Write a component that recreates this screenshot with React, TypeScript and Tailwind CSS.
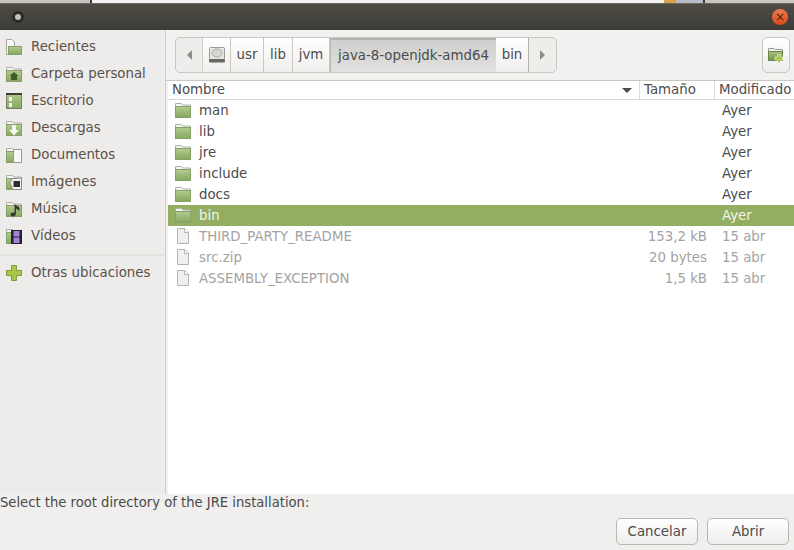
import React from "react";

const font = { fontFamily: '"DejaVu Sans", sans-serif' };

function FolderIcon({ selected }: { selected?: boolean }) {
  const id = selected ? "fold-sel" : "fold";
  return (
    <svg width="16" height="15" viewBox="0 0 16 15" className="shrink-0">
      <defs>
        <linearGradient id={id} x1="0" y1="0" x2="0" y2="1">
          <stop offset="0" stopColor="#b4cb90" />
          <stop offset="1" stopColor="#86a75c" />
        </linearGradient>
      </defs>
      <path d="M0.5 0.5 H6.5 L8 2 H15.5 V14.5 H0.5 Z" fill="#f4f4f1" stroke="#b0b0aa" />
      <rect x="0.5" y="3.5" width="15" height="11" fill={`url(#${id})`} stroke="#86a06a" />
    </svg>
  );
}

function FileIcon() {
  return (
    <svg width="16" height="16" viewBox="0 0 16 16" className="shrink-0">
      <path d="M2.5 0.5 H10 L13.5 4 V15.5 H2.5 Z" fill="#efefef" stroke="#b4b4b4" />
      <path d="M9.5 0.5 V4.5 H13.5" fill="#fff" stroke="#b4b4b4" />
    </svg>
  );
}

function SideIcon({ kind }: { kind: string }) {
  return (
    <svg width="16" height="16" viewBox="0 0 16 16" className="shrink-0">
      <defs>
        <linearGradient id={`side-${kind}`} x1="0" y1="0" x2="0" y2="1">
          <stop offset="0" stopColor="#b4cb90" />
          <stop offset="1" stopColor="#86a75c" />
        </linearGradient>
      </defs>
      {kind === "recent" && (
        <>
          <path d="M0.5 0.5 H6 L8.5 3 V15.5 H0.5 Z" fill="#f6f6f4" stroke="#a8a8a2" />
          <rect x="2.5" y="7.5" width="13" height="8" fill="url(#side-recent)" stroke="#86a06a" />
        </>
      )}
      {kind === "desktop" ? (
        <>
          <rect x="0.5" y="0.5" width="15" height="15" fill="url(#side-desktop)" stroke="#78806c" />
          <rect x="0" y="0" width="16" height="2" fill="#3f3d38" />
          <rect x="3" y="4" width="3" height="4" fill="#f2f2f0" />
          <rect x="3" y="10" width="3" height="4" fill="#f2f2f0" />
        </>
      ) : kind !== "recent" && kind !== "plus" ? (
        <>
          <path d="M0.5 1.5 H6.5 L8 3 H15.5 V15.5 H0.5 Z" fill="#f4f4f1" stroke="#b0b0aa" />
          <rect x="0.5" y="4.5" width="15" height="11" fill={`url(#side-${kind})`} stroke="#86a06a" />
        </>
      ) : null}
      {kind === "home" && <path d="M8 6 L12.5 10 H11 V14 H5 V10 H3.5 Z" fill="#3f5a2a" />}
      {kind === "download" && <path d="M6 5 H10 V10 H13 L8 15.5 L3 10 H6 Z" fill="#f7f7f5" />}
      {kind === "docs" && <rect x="7.5" y="2.5" width="8" height="13" fill="#f7f7f5" stroke="#9a9a94" />}
      {kind === "pics" && (
        <>
          <path d="M6.5 4.5 L15.5 4 V15.5 H7 L4 9 Z" fill="#f2f2f0" stroke="#8c8c86" />
          <rect x="7.5" y="7" width="6.5" height="6" fill="#2e2a33" />
        </>
      )}
      {kind === "music" && (
        <>
          <ellipse cx="7" cy="13.5" rx="2.5" ry="2" fill="#3a3a36" />
          <path d="M8.5 13.5 V3 L13.5 6.5 V10 L10 7.5 V13.5 Z" fill="#3a3a36" />
        </>
      )}
      {kind === "video" && (
        <>
          <rect x="5" y="2" width="11" height="14" fill="#26222b" />
          <rect x="7.5" y="3" width="6" height="5.5" fill="#a582d8" />
          <rect x="7.5" y="9.5" width="6" height="5.5" fill="#a582d8" />
        </>
      )}
      {kind === "plus" && (
        <path d="M5.5 0.5 H10.5 V5.5 H15.5 V10.5 H10.5 V15.5 H5.5 V10.5 H0.5 V5.5 H5.5 Z" fill="#a9c64c" stroke="#7f9a3a" />
      )}
    </svg>
  );
}

const places = [
  ["recent", "Recientes"],
  ["home", "Carpeta personal"],
  ["desktop", "Escritorio"],
  ["download", "Descargas"],
  ["docs", "Documentos"],
  ["pics", "Imágenes"],
  ["music", "Música"],
  ["video", "Vídeos"],
];

const rows = [
  { name: "man", size: "", date: "Ayer", folder: true },
  { name: "lib", size: "", date: "Ayer", folder: true },
  { name: "jre", size: "", date: "Ayer", folder: true },
  { name: "include", size: "", date: "Ayer", folder: true },
  { name: "docs", size: "", date: "Ayer", folder: true },
  { name: "bin", size: "", date: "Ayer", folder: true, selected: true },
  { name: "THIRD_PARTY_README", size: "153,2 kB", date: "15 abr" },
  { name: "src.zip", size: "20 bytes", date: "15 abr" },
  { name: "ASSEMBLY_EXCEPTION", size: "1,5 kB", date: "15 abr" },
];

const crumbClass =
  "h-full flex items-center justify-center border-r border-[#c9c7c3] bg-gradient-to-b from-white to-[#f0efed]";

export default function App() {
  return (
    <div className="w-[794px] h-[550px] overflow-hidden flex flex-col text-[13.33px] text-[#4c4c4c] bg-[#f2f1f0]" style={font}>
      {/* sliver of the window behind */}
      <div className="h-[3px] shrink-0 flex bg-[#c9c7c3]">
        <div className="w-[90px] bg-[#c8c6c2]" />
        <div className="w-[2px] bg-[#3c3b35]" />
        <div className="w-[572px] bg-[#f4f4f2]" />
        <div className="w-[12px] bg-[#d9a24a]" />
        <div className="w-[27px] bg-[#b9bcc6]" />
        <div className="w-[2px] bg-[#3c3b35]" />
      </div>

      {/* title bar */}
      <div className="h-[27px] shrink-0 flex items-center justify-between pl-[12px] pr-[6px] bg-gradient-to-b from-[#4f4c45] to-[#3c3b35] border-t border-[#6a675f]">
        <div className="w-[12px] h-[12px] rounded-full bg-[#c2c1bc] border-[3px] border-[#2b2a25]" />
        <div className="w-[16px] h-[16px] rounded-full bg-gradient-to-b from-[#ef7a4c] to-[#d8481b] flex items-center justify-center text-[12px] leading-none text-[#4a1f10]">
          ×
        </div>
      </div>

      <div className="flex-1 flex min-h-0">
        {/* sidebar */}
        <div className="w-[166px] shrink-0 bg-[#edecea] border-r border-[#cfcdc8] pt-[3px]">
          {places.map(([kind, label]) => (
            <div key={label} className="h-[27px] flex items-center gap-[9px] pl-[6px]">
              <SideIcon kind={kind} />
              <span className="text-[#5b5149]">{label}</span>
            </div>
          ))}
          <div className="mt-[5px] border-t-2 border-[#e3e2df]" />
          <div className="mt-[3px] h-[27px] flex items-center gap-[9px] pl-[6px]">
            <SideIcon kind="plus" />
            <span className="text-[#5b5149]">Otras ubicaciones</span>
          </div>
        </div>

        <div className="flex-1 min-w-0 flex flex-col">
          {/* path bar */}
          <div className="h-[51px] shrink-0 flex items-start justify-between pt-[7px] pl-[9px] pr-[4px] bg-[#f2f1ef] border-b border-[#c9c7c3]">
            <div className="h-[36px] flex items-stretch border border-[#c9c7c3] rounded-[5px] bg-[#eeedeb] overflow-hidden">
              <div className="w-[27px] border-r border-[#d2d0cc] flex items-center justify-center">
                <div className="w-0 h-0 border-y-[5px] border-y-transparent border-r-[5px] border-r-[#8d8c88]" />
              </div>
              <div className={`${crumbClass} w-[28px]`}>
                <svg width="18" height="16" viewBox="0 0 18 16">
                  <rect x="1.5" y="0.5" width="15" height="12" rx="1" fill="#e6e6e2" stroke="#9a9a94" />
                  <ellipse cx="9" cy="6" rx="5" ry="4" fill="#d6d6d1" stroke="#ababa5" />
                  <rect x="1" y="12" width="16" height="3.5" rx="1" fill="#6a6a65" />
                </svg>
              </div>
              <div className={`${crumbClass} w-[33px]`}>usr</div>
              <div className={`${crumbClass} w-[29px]`}>lib</div>
              <div className={`${crumbClass} w-[37px]`}>jvm</div>
              <div className="w-[166px] flex items-center justify-center border-l border-[#b9b7b3] border-t-2 border-t-[#b5b3af] bg-gradient-to-b from-[#cfcfcd] to-[#e2e1df]">
                java-8-openjdk-amd64
              </div>
              <div className={`${crumbClass} w-[33px] border-r-[#b5b3af]`}>bin</div>
              <div className="w-[27px] flex items-center justify-center">
                <div className="w-0 h-0 border-y-[5px] border-y-transparent border-l-[5px] border-l-[#8d8c88]" />
              </div>
            </div>
            <div className="w-[28px] h-[36px] flex items-center justify-center border border-[#c9c7c3] rounded-[5px] bg-gradient-to-b from-white to-[#eeedeb]">
              <svg width="16" height="16" viewBox="0 0 16 16">
                <defs>
                  <linearGradient id="newfold" x1="0" y1="0" x2="0" y2="1">
                    <stop offset="0" stopColor="#a9c283" />
                    <stop offset="1" stopColor="#6f9145" />
                  </linearGradient>
                </defs>
                <path d="M0.5 1.5 H6 L7 2.5 H14.5 V13.5 H0.5 Z" fill="#f1f1ee" stroke="#9a9a94" />
                <rect x="0.5" y="4.5" width="14" height="9" fill="url(#newfold)" stroke="#6d8a4c" />
                <path d="M9.5 7.5 H12.5 V10 H15 V13 H12.5 V15.5 H9.5 V13 H7 V10 H9.5 Z" fill="#a9c64c" stroke="#ffffff" strokeWidth="0.5" />
              </svg>
            </div>
          </div>

          {/* file list */}
          <div className="flex-1 min-h-0 ml-[2px] bg-white">
            <div className="h-[19px] flex items-stretch border-b border-[#d9d8d5]">
              <div className="w-[472px] flex items-center justify-between pl-[4px] pr-[7px] border-r border-[#dddcd9]">
                <span>Nombre</span>
                <div className="w-0 h-0 border-x-[5px] border-x-transparent border-t-[5px] border-t-[#4c4c4c]" />
              </div>
              <div className="w-[75px] flex items-center pl-[4px] border-r border-[#dddcd9]">Tamaño</div>
              <div className="flex-1 flex items-center pl-[4px] whitespace-nowrap overflow-hidden">Modificado</div>
            </div>
            {rows.map((r) => (
              <div
                key={r.name}
                className={`h-[21px] flex items-center ${r.selected ? "bg-[#93ae62]" : ""} ${
                  r.folder ? (r.selected ? "text-[#f2f4ec]" : "text-[#4c4c4c]") : "text-[#a3a3a3]"
                }`}
              >
                <div className="w-[472px] flex items-center gap-[8px] pl-[7px]">
                  {r.folder ? <FolderIcon selected={r.selected} /> : <FileIcon />}
                  <span>{r.name}</span>
                </div>
                <div className="w-[75px] pr-[8px] text-right">{r.size}</div>
                <div className="flex-1 pl-[7px] whitespace-nowrap">{r.date}</div>
              </div>
            ))}
          </div>
        </div>
      </div>

      {/* footer */}
      <div className="h-[56px] shrink-0 bg-[#f0efed] flex flex-col">
        <div className="h-[16px] mt-[1px] text-[13.17px] leading-[16px] text-[#4a4a4a]">Select the root directory of the JRE installation:</div>
        <div className="flex justify-end gap-[9px] pr-[5px] mt-[7px]">
          <button className="w-[82px] h-[27px] border border-[#b9b7b3] rounded-[5px] bg-gradient-to-b from-white to-[#eeedeb]">Cancelar</button>
          <button className="w-[82px] h-[27px] border border-[#b9b7b3] rounded-[5px] bg-gradient-to-b from-white to-[#eeedeb]">Abrir</button>
        </div>
      </div>
    </div>
  );
}
